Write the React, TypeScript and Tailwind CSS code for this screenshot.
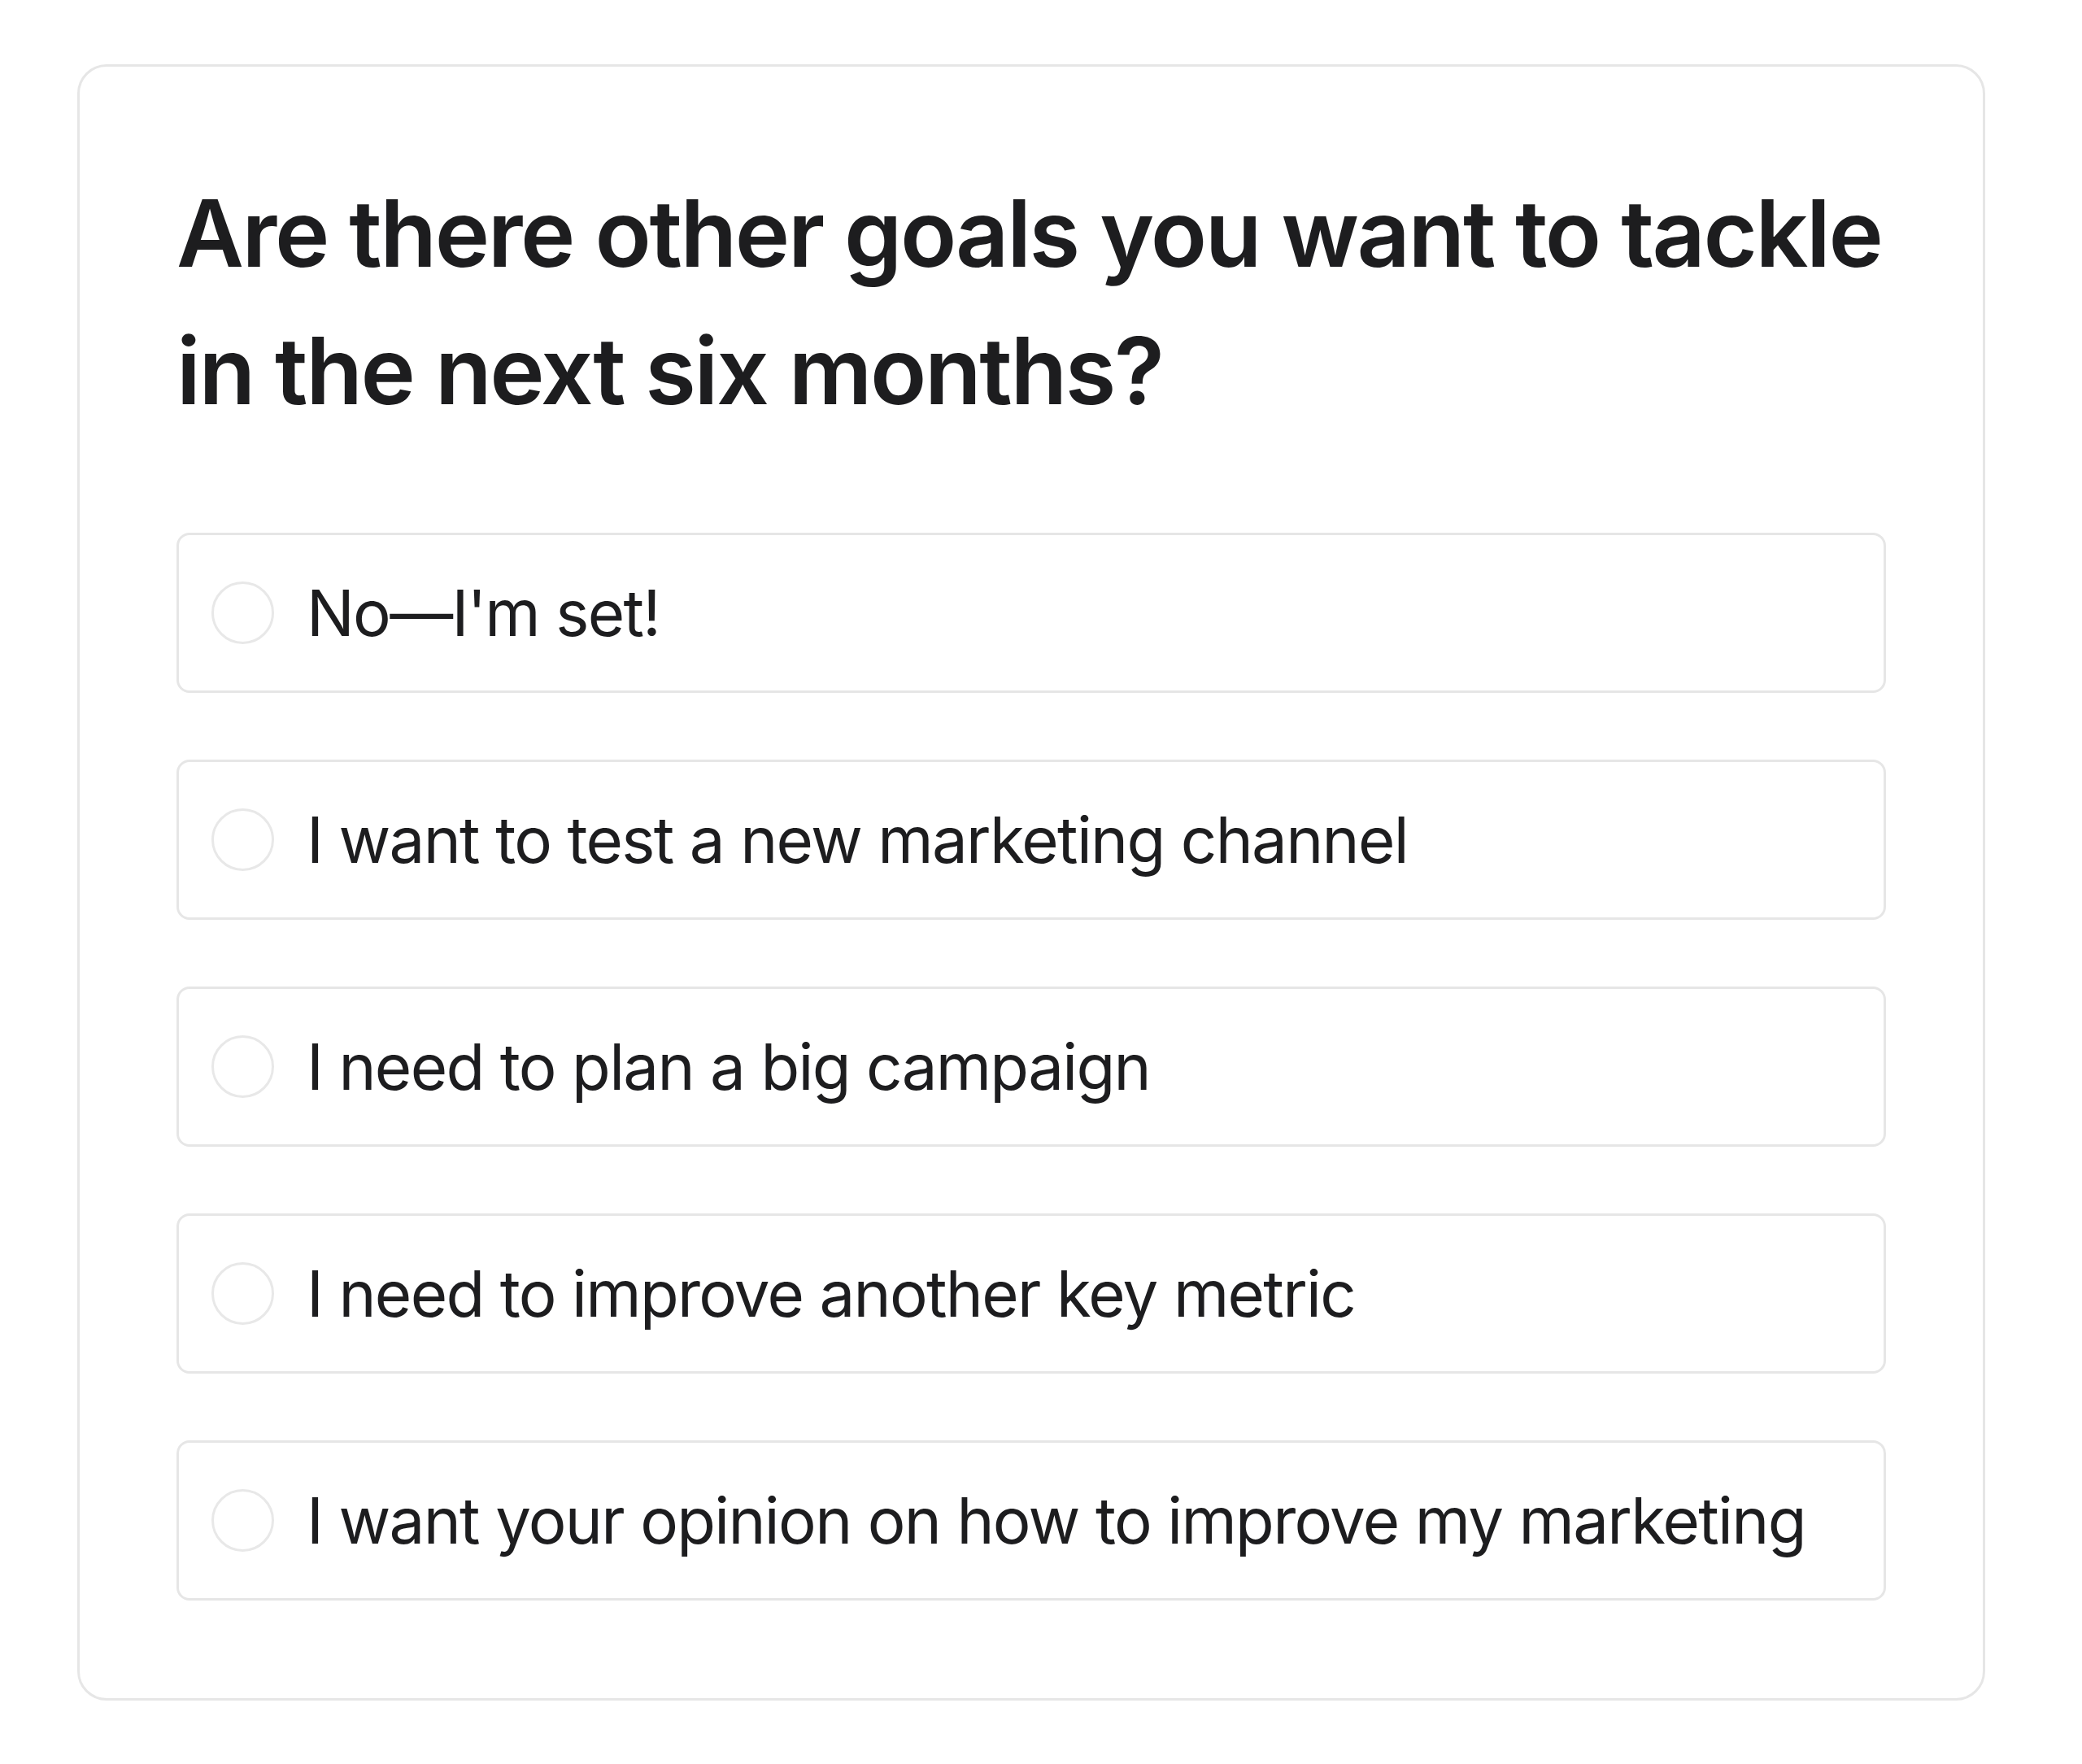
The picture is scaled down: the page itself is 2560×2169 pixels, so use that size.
import React from "react";

const options = [
  "No—I'm set!",
  "I want to test a new marketing channel",
  "I need to plan a big campaign",
  "I need to improve another key metric",
  "I want your opinion on how to improve my marketing",
];

export default function App() {
  return (
    <div className="min-h-screen bg-white pt-[79px] pl-[95px] font-['Inter','Liberation_Sans',sans-serif]">
      <div className="w-[2346px] rounded-[36px] border-[3px] border-[#e6e6e6] bg-white px-[119px] pt-[120px] pb-[120px]">
        <h1 className="text-[114px] font-semibold leading-[169px] tracking-[-2.4px] text-[#1d1d1f]">
          Are there other goals you want to tackle in the next six months?
        </h1>
        <div className="mt-[115px] flex flex-col gap-[82px]">
          {options.map((label) => (
            <label
              key={label}
              className="flex h-[197px] cursor-pointer items-center rounded-[16px] border-[3px] border-[#e6e6e6] pl-[40px]"
            >
              <span className="h-[77px] w-[77px] shrink-0 rounded-full border-[3px] border-[#e8e8e8] bg-white" />
              <span className="ml-[40px] text-[78px] font-normal tracking-[-1.7px] text-[#1d1d1f]">{label}</span>
            </label>
          ))}
        </div>
      </div>
    </div>
  );
}
